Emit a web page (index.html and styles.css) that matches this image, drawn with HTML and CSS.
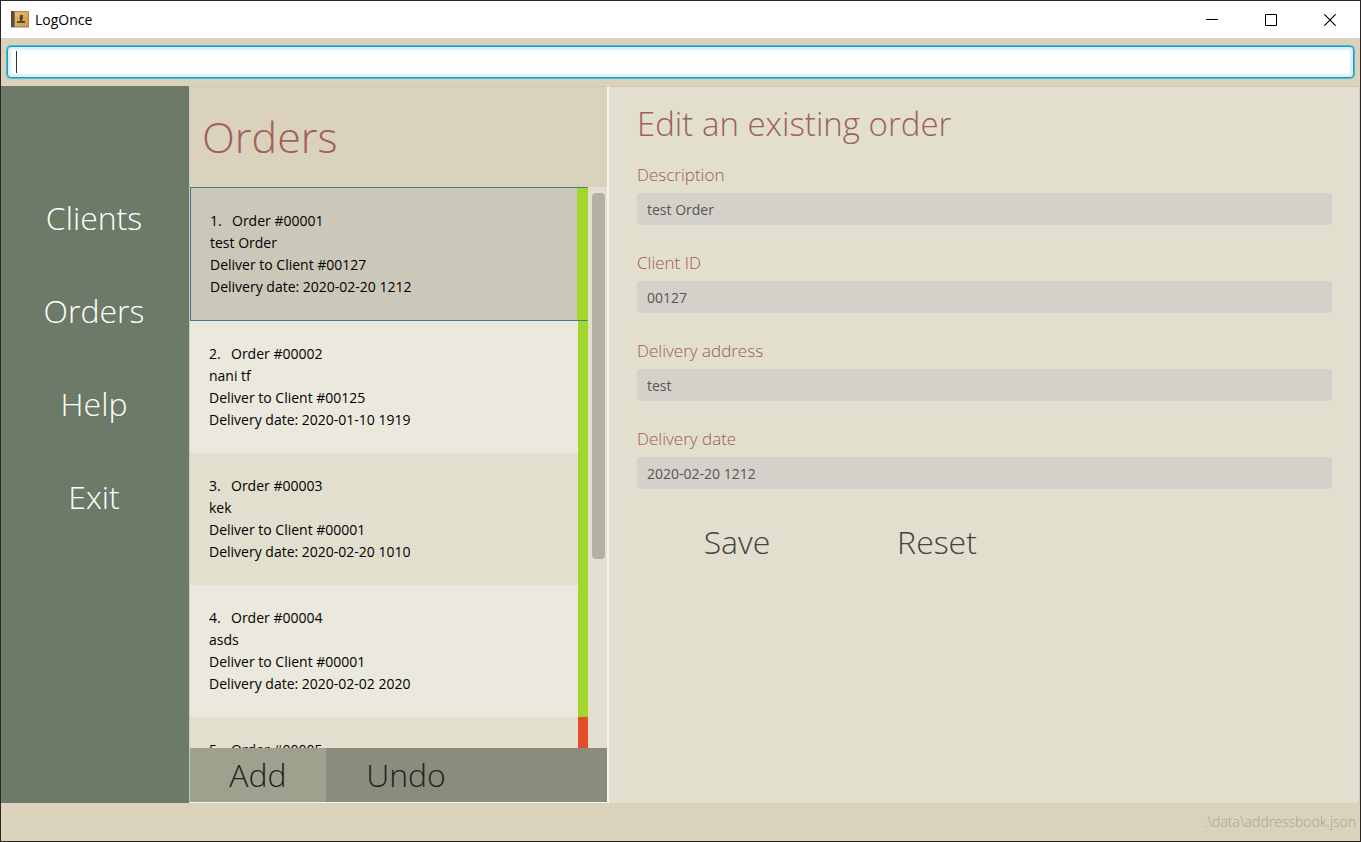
FILE: index.html
```html
<!DOCTYPE html>
<html lang="en">
<head>
<meta charset="utf-8">
<title>LogOnce</title>
<link rel="stylesheet" href="styles.css">
</head>
<body>
<div class="window">
  <header class="titlebar">
    <svg class="app-icon" width="18" height="17" viewBox="0 0 18 17" aria-hidden="true">
      <defs>
        <linearGradient id="cover" x1="0" y1="0" x2="1" y2="1">
          <stop offset="0" stop-color="#e3bd74"/>
          <stop offset="1" stop-color="#cf9a45"/>
        </linearGradient>
      </defs>
      <rect width="18" height="16" fill="#b08a50"/>
      <rect y="16" width="18" height="1" fill="#c9c0b4"/>
      <rect x="4" y="1" width="13" height="14" fill="url(#cover)"/>
      <rect width="3" height="16" fill="#5c4a42"/>
      <rect x="3" width="1" height="16" fill="#8a7054"/>
      <path d="M9 4h3v3.500l-.7 1v1.500h2.700v2H6v-2h3V8.500l-.5-1z" fill="#5a4632"/>
    </svg>
    <span class="app-name">LogOnce</span>
    <div class="window-controls">
      <button class="window-button" type="button" aria-label="Minimize"><svg width="12" height="12" viewBox="0 0 12 12"><path d="M0 5.500h12" stroke="#000"/></svg></button>
      <button class="window-button" type="button" aria-label="Maximize"><svg width="12" height="12" viewBox="0 0 12 12"><path d="M.5.500h11v11H.5z" fill="none" stroke="#000"/></svg></button>
      <button class="window-button" type="button" aria-label="Close"><svg width="12" height="12" viewBox="0 0 12 12"><path d="M.3.300l11.400 11.400M11.700.300L.3 11.700" stroke="#000" stroke-width="1.100"/></svg></button>
    </div>
  </header>

  <div class="command-bar">
    <input class="command-input" type="text" aria-label="Command">
    <span class="caret"></span>
  </div>

  <main class="content">
    <nav class="sidebar">
      <button class="nav-button" type="button">Clients</button>
      <button class="nav-button" type="button">Orders</button>
      <button class="nav-button" type="button">Help</button>
      <button class="nav-button" type="button">Exit</button>
    </nav>

    <section class="orders">
      <h1 class="orders-title">Orders</h1>
      <div class="list-area">
        <ol class="order-list">
          <li class="order order-selected">
            <div class="order-text">
              <p><span class="order-index">1.</span>Order #00001</p>
              <p>test Order</p>
              <p>Deliver to Client #00127</p>
              <p>Delivery date: 2020-02-20 1212</p>
            </div>
            <div class="status status-done"></div>
          </li>
          <li class="order">
            <div class="order-text">
              <p><span class="order-index">2.</span>Order #00002</p>
              <p>nani tf</p>
              <p>Deliver to Client #00125</p>
              <p>Delivery date: 2020-01-10 1919</p>
            </div>
            <div class="status status-done"></div>
          </li>
          <li class="order">
            <div class="order-text">
              <p><span class="order-index">3.</span>Order #00003</p>
              <p>kek</p>
              <p>Deliver to Client #00001</p>
              <p>Delivery date: 2020-02-20 1010</p>
            </div>
            <div class="status status-done"></div>
          </li>
          <li class="order">
            <div class="order-text">
              <p><span class="order-index">4.</span>Order #00004</p>
              <p>asds</p>
              <p>Deliver to Client #00001</p>
              <p>Delivery date: 2020-02-02 2020</p>
            </div>
            <div class="status status-done"></div>
          </li>
          <li class="order">
            <div class="order-text">
              <p><span class="order-index">5.</span>Order #00005</p>
            </div>
            <div class="status status-pending"></div>
          </li>
        </ol>
        <div class="scroll-track"><div class="scroll-thumb"></div></div>
      </div>
      <div class="list-actions">
        <button class="action-button action-hover" type="button">Add</button>
        <button class="action-button" type="button">Undo</button>
      </div>
    </section>

    <form class="editor">
      <h2 class="editor-title">Edit an existing order</h2>
      <div class="field">
        <label for="description">Description</label>
        <input id="description" type="text" value="test Order">
      </div>
      <div class="field">
        <label for="client">Client ID</label>
        <input id="client" type="text" value="00127">
      </div>
      <div class="field">
        <label for="address">Delivery address</label>
        <input id="address" type="text" value="test">
      </div>
      <div class="field">
        <label for="date">Delivery date</label>
        <input id="date" type="text" value="2020-02-20 1212">
      </div>
      <div class="editor-actions">
        <button class="editor-button" type="button">Save</button>
        <button class="editor-button" type="button">Reset</button>
      </div>
    </form>
  </main>

  <footer class="footer">.\data\addressbook.json</footer>
</div>
</body>
</html>
```

FILE: styles.css
```css
* {
  box-sizing: border-box;
}

body {
  margin: 0;
  font-family: "Open Sans", "Noto Sans", sans-serif;
  color: #000;
}

h1, h2, p, ol {
  margin: 0;
  padding: 0;
  font-weight: 300;
}

button {
  padding: 0;
  border: 0;
  background: none;
  font-family: inherit;
  font-weight: 300;
}

.window {
  display: flex;
  flex-direction: column;
  height: 100vh;
  border: 1px solid #2a2627;
  background: #dad2ba;
}

.titlebar {
  display: flex;
  align-items: center;
  flex: none;
  height: 37px;
  padding: 0 1px 0 10px;
  background: #fff;
}

.app-name {
  margin-left: 6px;
  font-size: 14px;
}

.window-controls {
  display: flex;
  align-self: stretch;
  margin-left: auto;
}

.window-button {
  display: flex;
  align-items: center;
  justify-content: center;
  width: 59px;
}

.command-bar {
  position: relative;
  flex: none;
  height: 48px;
  padding: 8px 6px;
}

.command-input {
  display: block;
  width: 100%;
  height: 32px;
  padding: 0 8px;
  border: 1px solid #039ed3;
  border-radius: 4px;
  outline: 0;
  background: #fff;
  box-shadow: 0 0 1px 1px #5fb5c8, inset 0 0 2px 3px #dceffa;
  font: 14px "Open Sans", sans-serif;
}

.caret {
  position: absolute;
  top: 13px;
  left: 15px;
  width: 1px;
  height: 22px;
  background: #333;
}

.content {
  display: flex;
  flex: 1;
  min-height: 0;
}

.sidebar {
  display: flex;
  flex-direction: column;
  flex: none;
  width: 188px;
  padding: 86px 2px 0 0;
  background: #6d7a68;
}

.nav-button {
  height: 93px;
  padding-bottom: 2px;
  color: #fff;
  font-size: 32px;
}

.orders {
  display: flex;
  flex-direction: column;
  flex: none;
  width: 420px;
  border: 1px solid #c9c9c5;
  border-width: 1px 2px 1px 1px;
  border-right-color: #f4f4f4;
  border-bottom-color: #f4f4f4;
  background: #e2dfce;
}

.orders-title {
  flex: none;
  height: 100px;
  padding-left: 12px;
  background: #dad2ba;
  color: #a06060;
  font-size: 43px;
  line-height: 100px;
}

.list-area {
  display: flex;
  flex: 1;
  min-height: 0;
  overflow: hidden;
}

.order-list {
  flex: 1;
  list-style: none;
}

.order {
  display: flex;
  height: 132px;
  background: #e2dfce;
}

.order:nth-child(even) {
  background: #ebe9dd;
}

.order-selected {
  height: 134px;
  border: 1px solid #3e7b91;
  border-right-color: #a1d62c;
  background: #ccc8b9;
}

.order-text {
  flex: 1;
  padding: 22px 19px;
  font-size: 14px;
  line-height: 22px;
}

.order-text p {
  font-weight: 400;
}

.order-index {
  display: inline-block;
  width: 22px;
}

.status {
  width: 10px;
}

.status-done {
  background: #a1d62c;
}

.status-pending {
  background: #e64b2e;
}

.scroll-track {
  flex: none;
  width: 19px;
  padding: 6px 2px 0 4px;
}

.scroll-thumb {
  height: 66%;
  border-radius: 4px;
  background: #b4b1a3;
}

.list-actions {
  display: flex;
  flex: none;
  height: 54px;
  background: #8b8d7c;
}

.action-button {
  width: 160px;
  padding-bottom: 2px;
  color: #222;
  font-size: 32px;
}

.action-hover {
  width: 136px;
  background: #9fa18f;
}

.editor {
  flex: 1;
  padding: 13px 27px 0 28px;
  border-top: 1px solid #c9c9c5;
  border-right: 1px solid #c9c9c5;
  background: #e2dfce;
}

.editor-title {
  margin-bottom: 15px;
  color: #a06060;
  font-size: 33px;
  line-height: 48px;
}

.field {
  margin-bottom: 26px;
}

.field label {
  display: block;
  margin-bottom: 6px;
  color: #a05858;
  font-size: 17px;
  font-weight: 300;
  line-height: 24px;
}

.field input {
  display: block;
  width: 100%;
  height: 32px;
  padding: 0 10px;
  border: 0;
  border-radius: 4px;
  background: #d4d1ca;
  color: #555;
  font: 14px "Open Sans", sans-serif;
}

.editor-actions {
  display: flex;
}

.editor-button {
  width: 200px;
  height: 52px;
  color: #404542;
  font-size: 32px;
}

.footer {
  flex: none;
  height: 38px;
  padding-right: 4px;
  color: #a0a5a0;
  font-size: 14px;
  font-weight: 300;
  line-height: 38px;
  text-align: right;
}
```
